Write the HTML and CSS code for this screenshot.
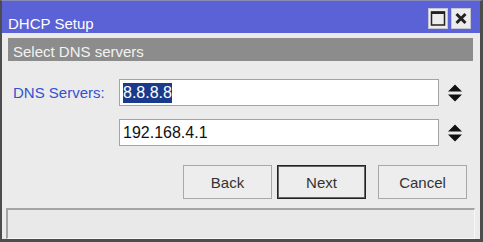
FILE: index.html
```html
<!DOCTYPE html>
<html>
<head>
    <title>DHCP Setup</title>
    <link rel="stylesheet" href="styles.css">
</head>
<body>
    <div class="window">
        <div class="titlebar">
            <span class="title">DHCP Setup</span>
            <div class="title-buttons">
                <span class="tbtn">
                    <svg width="18" height="19" viewBox="0 0 18 19">
                        <rect x="2.5" y="3" width="13" height="13" fill="none" stroke="#222" stroke-width="1.5"/>
                        <rect x="2" y="2.5" width="14" height="2.5" fill="#222"/>
                    </svg>
                </span>
                <span class="tbtn">
                    <svg width="18" height="19" viewBox="0 0 18 19">
                        <path d="M4.5 5 L13.5 14 M13.5 5 L4.5 14" stroke="#222" stroke-width="3"/>
                    </svg>
                </span>
            </div>
        </div>

        <div class="content">
            <div class="step">Select DNS servers</div>

            <div class="form">
                <label class="label">DNS Servers:</label>
                <div class="field"><span class="sel">8.8.8.8</span></div>
                <svg class="spin" width="16" height="20" viewBox="0 0 16 20">
                    <path d="M1 8.5 L8 1.5 L15 8.5 Z M1 11.5 L15 11.5 L8 18.5 Z" fill="#111"/>
                </svg>

                <span></span>
                <div class="field">192.168.4.1</div>
                <svg class="spin" width="16" height="20" viewBox="0 0 16 20">
                    <path d="M1 8.5 L8 1.5 L15 8.5 Z M1 11.5 L15 11.5 L8 18.5 Z" fill="#111"/>
                </svg>
            </div>

            <div class="buttons">
                <button class="btn back">Back</button>
                <button class="btn next">Next</button>
                <button class="btn">Cancel</button>
            </div>

            <div class="status"></div>
        </div>
    </div>
</body>
</html>
```

FILE: styles.css
```css
body {
    margin: 0;
    padding: 0;
    font-family: "Liberation Sans", Arial, sans-serif;
    background-color: #ebebeb;
}

.window {
    width: 483px;
    height: 242px;
    box-sizing: border-box;
    border-top: 1px solid #8a8cb8;
    border-left: 2px solid #4c4c4c;
    border-right: 3px solid #4c4c4c;
    border-bottom: 3px solid #4c4c4c;
    background-color: #ebebeb;
    display: flex;
    flex-direction: column;
}

.titlebar {
    height: 32px;
    background-color: #5b62d5;
    display: flex;
    justify-content: space-between;
    align-items: flex-start;
    padding: 0 9px 0 6px;
}

.title {
    color: #fff;
    font-size: 15px;
    line-height: 18px;
    margin-top: 14px;
}

.title-buttons {
    display: flex;
    gap: 3px;
    margin-top: 7px;
}

.tbtn {
    width: 20px;
    height: 21px;
    box-sizing: border-box;
    background-color: #ececec;
    border: 1px solid #c4c4d4;
    display: flex;
    align-items: center;
    justify-content: center;
}

.content {
    flex: 1;
    display: flex;
    flex-direction: column;
}

.step {
    margin: 5px 7px 0 6px;
    height: 23px;
    box-sizing: border-box;
    padding: 4px 0 0 5px;
    line-height: 19px;
    font-size: 15px;
    background-color: #8c8c8c;
    color: #f2f2f2;
}

.form {
    margin-top: 18px;
    padding-left: 11px;
    display: grid;
    grid-template-columns: 98px 320px 16px;
    grid-auto-rows: 27px;
    column-gap: 8px;
    row-gap: 13px;
    align-items: center;
}

.label {
    color: #3152cf;
    font-size: 15px;
}

.field {
    height: 27px;
    box-sizing: border-box;
    border: 1px solid #a4a4a4;
    background-color: #fff;
    font-size: 16px;
    color: #111;
    padding-left: 3px;
    display: flex;
    align-items: center;
}

.sel {
    background-color: #1a3b8c;
    color: #fff;
    line-height: 20px;
}

.buttons {
    margin-top: 19px;
    padding-right: 13px;
    display: flex;
    justify-content: flex-end;
}

.btn {
    width: 89px;
    height: 34px;
    box-sizing: border-box;
    border: 1px solid #a8a8a8;
    background-color: #ededed;
    font-family: "Liberation Sans", Arial, sans-serif;
    font-size: 15px;
    color: #333;
    padding: 0;
}

.back {
    margin-right: 5px;
}

.next {
    margin-right: 12px;
    border-color: #222;
    box-shadow: inset 0 0 0 1px #666;
}

.status {
    margin: 9px 5px 0 4px;
    flex: 1;
    border-top: 2px solid #a4a4a4;
    border-left: 2px solid #a4a4a4;
    border-right: 1px solid #f8f8f8;
    border-bottom: 1px solid #f8f8f8;
    background-color: #e9e9e9;
}
```
